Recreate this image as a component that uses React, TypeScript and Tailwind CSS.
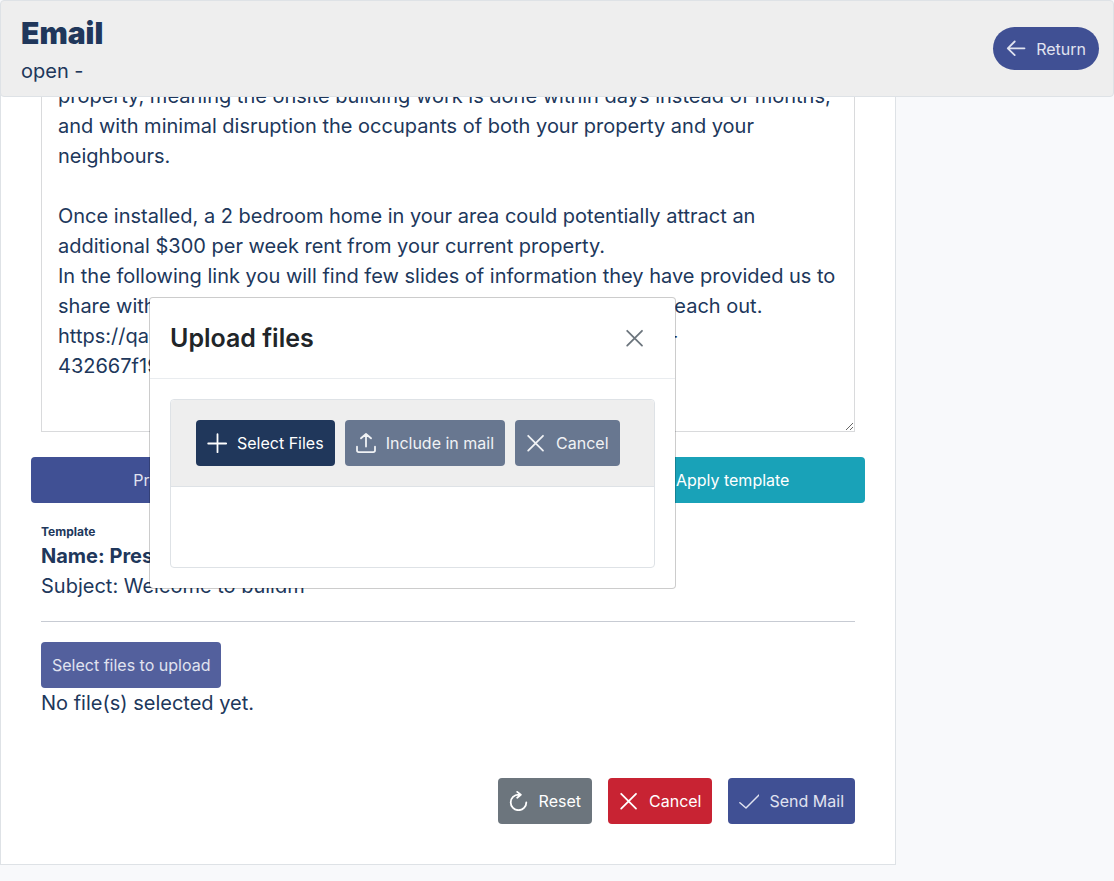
import type { ReactNode } from "react";

function Icon({ children }: { children: ReactNode }) {
  return (
    <svg
      viewBox="0 0 20 20"
      className="h-5 w-5 shrink-0"
      fill="none"
      stroke="currentColor"
      strokeWidth="1.8"
      strokeLinecap="round"
      strokeLinejoin="round"
      aria-hidden="true"
    >
      {children}
    </svg>
  );
}

const ArrowLeft = () => (
  <Icon>
    <path d="M18.5 9.3H2M8.7 2.5 1.8 9.3l6.9 6.8" />
  </Icon>
);
const Plus = () => (
  <Icon>
    <path d="M10.5 1.2v18M1.2 10.5h18" />
  </Icon>
);
const Upload = () => (
  <Icon>
    <path d="M10 13.5V1M5 5.3 10 1l5 4.3M1 13.7v3.6c0 1 .8 1.8 1.8 1.8h14.4c1 0 1.8-.8 1.8-1.8v-3.6" />
  </Icon>
);
const Times = () => (
  <Icon>
    <path d="m2.2 2.8 14.8 14.8m0-14.8L2.2 17.6" />
  </Icon>
);
const Refresh = () => (
  <Icon>
    <path d="M10.4 3.6H9.5a7.8 7.8 0 1 0 7.8 7.8M8.2 .9l3.6 2.8-3.6 3" />
  </Icon>
);
const Check = () => (
  <Icon>
    <path d="m.9 11.8 6.1 5.2L20 4" strokeWidth="1.5" />
  </Icon>
);

type ButtonProps = {
  children: ReactNode;
  icon?: ReactNode;
  className: string;
  disabled?: boolean;
};

function Button({ children, icon, className, disabled }: ButtonProps) {
  return (
    <button
      type="button"
      disabled={disabled}
      className={`flex h-[46px] items-center justify-center gap-[10px] rounded px-[11px] text-base whitespace-nowrap ${className}`}
    >
      {icon}
      {children}
    </button>
  );
}

const message = `property, meaning the onsite building work is done within days instead of months, and with minimal disruption the occupants of both your property and your neighbours.

Once installed, a 2 bedroom home in your area could potentially attract an additional $300 per week rent from your current property.
In the following link you will find few slides of information they have provided us to share with you. Had you any questions please do not hesitate to reach out.
https://qa.buildm.com/presentation/slides/f1b7c2a43266719c0ef-432667f19c0e4b7d8a21
`;

function UploadDialog() {
  return (
    <section
      role="dialog"
      aria-labelledby="upload-title"
      className="absolute top-[297px] left-[149px] z-20 w-[527px] rounded border border-black/20 bg-white bg-clip-padding"
    >
      <header className="flex h-[81px] items-center justify-between border-b border-[#e9ecef] px-5 pb-px">
        <h2 id="upload-title" className="text-[25px] font-semibold text-[#212529]">
          Upload files
        </h2>
        <button type="button" aria-label="Close" className="px-[10px] text-[#6c757d]">
          <Times />
        </button>
      </header>
      <div className="p-5">
        <div className="rounded border border-[#dee2e6]">
          <div className="flex gap-[10px] rounded-t border-b border-[#dee2e6] bg-[#eeeeee] px-[25px] py-5">
            <Button icon={<Plus />} className="bg-[#20375b] text-white">
              Select Files
            </Button>
            <Button icon={<Upload />} disabled className="bg-[#687790] text-[#f0f2f5]">
              Include in mail
            </Button>
            <Button icon={<Times />} disabled className="bg-[#687790] text-[#f0f2f5]">
              Cancel
            </Button>
          </div>
          <div className="h-20" />
        </div>
      </div>
    </section>
  );
}

export default function App() {
  return (
    <div className="relative min-h-screen bg-[#f8f9fb] pb-4 font-['Inter',sans-serif] text-xl leading-[30px] text-[#20375b]">
      <header className="sticky top-0 z-10 flex h-[97px] items-center justify-between rounded border border-[#dee2e6] bg-[#eeeeee] pr-[14px] pl-5">
        <div className="pt-[3px]">
          <h1 className="text-[30px] leading-9 font-black">Email</h1>
          <p className="mt-[5px]">open -</p>
        </div>
        <button
          type="button"
          className="flex h-[43px] items-center gap-[10px] rounded-full bg-[#405094] px-[13px] text-base text-[#e0e3f0]"
        >
          <ArrowLeft />
          Return
        </button>
      </header>

      <main className="-mt-[33px] max-w-4xl border border-t-0 border-[#dee2e6] bg-white px-10 pb-10">
        <textarea
          aria-label="Message"
          defaultValue={message}
          className="block h-[368px] w-full resize border border-[#d9dadc] bg-white p-4"
        />
        <div className="-mx-[10px] mt-[25px] grid grid-cols-3 gap-5">
          <Button className="bg-[#405094] text-[#e0e3f0]">Preview</Button>
          <Button className="bg-[#405094] text-[#e0e3f0]">Save template</Button>
          <Button className="bg-[#19a2b8] text-white">Apply template</Button>
        </div>
        <section className="mt-5 border-b border-[#c7cbd3] pb-5">
          <h2 className="text-xs leading-[18px] font-bold">Template</h2>
          <p className="font-bold">Name: Presentation</p>
          <p>Subject: Welcome to buildm</p>
        </section>
        <section className="mt-5">
          <Button className="bg-[#53609d] text-[#e0e3f0]">Select files to upload</Button>
          <p>No file(s) selected yet.</p>
        </section>
        <div className="mt-[60px] flex justify-end gap-4">
          <Button icon={<Refresh />} className="bg-[#6c757d] text-white">
            Reset
          </Button>
          <Button icon={<Times />} className="bg-[#c82333] text-white">
            Cancel
          </Button>
          <Button icon={<Check />} className="bg-[#405094] text-[#e0e3f0]">
            Send Mail
          </Button>
        </div>
      </main>

      <UploadDialog />
    </div>
  );
}
